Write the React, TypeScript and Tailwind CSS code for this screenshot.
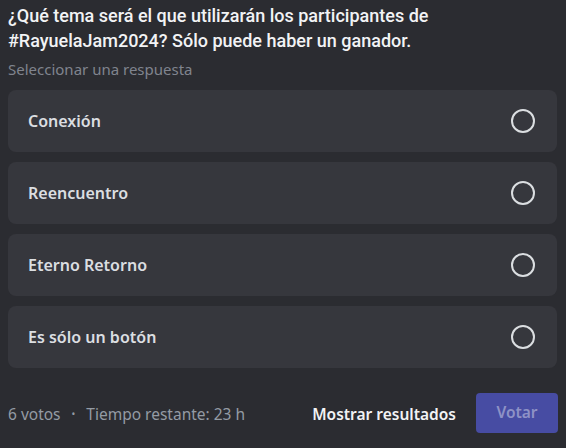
import React from "react";

const options = ["Conexión", "Reencuentro", "Eterno Retorno", "Es sólo un botón"];

export default function App() {
  return (
    <div
      className="w-[566px] h-[448px] bg-[#2b2c31] px-2 pt-[3px] overflow-hidden"
      style={{ fontFamily: '"Noto Sans", "Open Sans", sans-serif' }}
    >
      <div
        className="text-[18px] leading-[25px] font-medium text-[#f2f3f5]"
        style={{ fontFamily: 'Roboto, "Noto Sans", sans-serif' }}
      >
        ¿Qué tema será el que utilizarán los participantes de #RayuelaJam2024? Sólo puede haber un ganador.
      </div>
      <div className="text-[15px] leading-[20px] text-[#80848e] mt-[6px]">Seleccionar una respuesta</div>
      <div className="flex flex-col gap-[10px] mt-[11px] pr-[1px]">
        {options.map((o) => (
          <div
            key={o}
            className="h-[62px] rounded-lg bg-[#36373d] flex items-center justify-between pl-5 pr-[22px]"
          >
            <span className="text-[16px] font-semibold text-[#dbdee1]">{o}</span>
            <span className="w-6 h-6 rounded-full border-2 border-[#dbdee1]" />
          </div>
        ))}
      </div>
      <div className="flex items-center justify-between mt-[25px]">
        <div className="text-[15.5px] text-[#949ba4] flex items-center pt-[3px]">
          <span>6 votos</span>
          <span className="mx-[11px] text-[10px]">•</span>
          <span>Tiempo restante: 23 h</span>
        </div>
        <div className="flex items-center gap-5">
          <span className="text-[15.5px] font-semibold text-[#f2f3f5] pt-[3px]">Mostrar resultados</span>
          <div className="w-[82px] h-10 rounded bg-[#474ca3] flex items-center justify-center text-[15.5px] font-semibold text-[#8e92c6]">
            Votar
          </div>
        </div>
      </div>
    </div>
  );
}
